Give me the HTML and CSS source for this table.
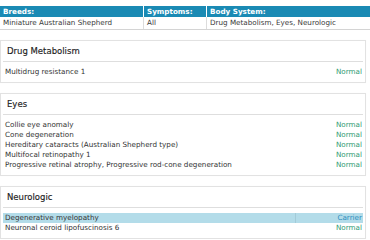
FILE: index.html
```html
<!DOCTYPE html>
<html>
<head>
<meta charset="utf-8">
<link rel="stylesheet" href="styles.css">
</head>
<body>
<table class="summary">
  <tr class="head">
    <th class="c1">Breeds:</th>
    <th class="c2">Symptoms:</th>
    <th class="c3">Body System:</th>
  </tr>
  <tr class="data">
    <td>Miniature Australian Shepherd</td>
    <td>All</td>
    <td>Drug Metabolism, Eyes, Neurologic</td>
  </tr>
</table>

<div class="card">
  <div class="title">Drug Metabolism</div>
  <div class="rows">
    <div class="row"><span class="name">Multidrug resistance 1</span><span class="res normal">Normal</span></div>
  </div>
</div>

<div class="card">
  <div class="title">Eyes</div>
  <div class="rows">
    <div class="row"><span class="name">Collie eye anomaly</span><span class="res normal">Normal</span></div>
    <div class="row"><span class="name">Cone degeneration</span><span class="res normal">Normal</span></div>
    <div class="row"><span class="name">Hereditary cataracts (Australian Shepherd type)</span><span class="res normal">Normal</span></div>
    <div class="row"><span class="name">Multifocal retinopathy 1</span><span class="res normal">Normal</span></div>
    <div class="row"><span class="name">Progressive retinal atrophy, Progressive rod-cone degeneration</span><span class="res normal">Normal</span></div>
  </div>
</div>

<div class="card">
  <div class="title">Neurologic</div>
  <div class="rows">
    <div class="row hl"><span class="name">Degenerative myelopathy</span><span class="res carrier">Carrier</span></div>
    <div class="row"><span class="name">Neuronal ceroid lipofuscinosis 6</span><span class="res normal">Normal</span></div>
  </div>
</div>
</body>
</html>
```
FILE: styles.css
```css
html, body {
  margin: 0;
  padding: 0;
  background: #ffffff;
}
body {
  font-family: "DejaVu Sans", Verdana, sans-serif;
  font-size: 7.2px;
  color: #3a3a3a;
  width: 370px;
}
.summary {
  margin-top: 6px;
  width: 370px;
  border-collapse: collapse;
  table-layout: fixed;
}
.summary th, .summary td {
  text-align: left;
  padding: 0 3px;
  white-space: nowrap;
}
.summary .c1 { width: 137px; }
.summary .c2 { width: 56px; }
.head th {
  background: #1a8ab4;
  color: #ffffff;
  font-weight: bold;
  height: 11px;
  line-height: 11px;
  border-left: 1px solid #ffffff;
}
.head th.c1 { border-left: none; }
.data td {
  height: 12px;
  line-height: 12px;
  border-left: 1px solid #dcdcdc;
  border-bottom: 1px solid #d4d4d4;
}
.data td:first-child { border-left: none; }
.card {
  margin-top: 10px;
  width: 364px;
  border: 1px solid #e2e2e2;
  box-shadow: 0 0 1px rgba(0,0,0,0.04);
  background: #fff;
}
.title {
  height: 20px;
  line-height: 21px;
  padding-left: 4px;
  font-size: 8.5px;
  color: #1e1e1e;
  -webkit-text-stroke: 0.15px #1e1e1e;
  border-bottom: 1px solid #dedede;
  margin: 0 2px;
}
.rows {
  padding: 5px 2px 5px 2px;
}
.row {
  display: flex;
  height: 10px;
  line-height: 10px;
}
.name {
  flex: 1;
  padding-left: 2px;
  color: #333;
}
.res {
  width: 66px;
  text-align: right;
  padding-right: 1px;
  border-left: 1px solid transparent;
}
.normal { color: #2f9a72; }
.carrier { color: #2e8fc0; }
.hl {
  background: #b3dce9;
}
.hl .res { border-left-color: #a3cbd8; }
```
